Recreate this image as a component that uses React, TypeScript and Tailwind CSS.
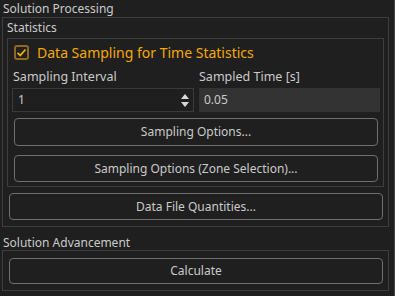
import { useState } from 'react';

const font = { fontFamily: '"Noto Sans", "Open Sans", sans-serif' };

function PanelButton({ label, className }: { label: string; className: string }) {
  return (
    <button
      className={`flex items-center justify-center rounded-[4px] border border-[#6e6e6e] bg-[#1f1f1f] text-[12px] text-[#cacaca] ${className}`}
    >
      {label}
    </button>
  );
}

export default function App() {
  const [sampling, setSampling] = useState(true);

  return (
    <div className="h-[296px] w-[395px] overflow-hidden bg-[#1f1f1f] text-[12px] leading-none text-[#cacaca]" style={font}>
      <div className="h-full w-[395px] border-r border-[#454545]">
        {/* Solution Processing */}
        <div className="flex h-[17px] items-center pl-[3px]">Solution Processing</div>
        <div className="ml-[2px] h-[210px] w-[387px] border border-[#3e3e3e]">
          <div className="flex h-[20px] items-center pl-[4px]">Statistics</div>

          {/* Statistics group */}
          <div className="ml-[4px] h-[149px] w-[377px] border border-[#3e3e3e]">
            <label className="mt-[6px] ml-[6px] flex h-[15px] cursor-pointer items-center gap-[8px]">
              <span
                onClick={() => setSampling(!sampling)}
                className="flex h-[15px] w-[15px] items-center justify-center rounded-[3px] border-2 border-[#8c6a24] bg-[#1f1f1f]"
              >
                {sampling && (
                  <svg width="11" height="11" viewBox="0 0 11 11">
                    <path d="M1.5 5.8 L4.3 8.4 L9.5 2.5" fill="none" stroke="#f5a800" strokeWidth="1.8" />
                  </svg>
                )}
              </span>
              <span className="text-[14px] text-[#f5a800]">Data Sampling for Time Statistics</span>
            </label>

            <div className="mt-[9px] flex gap-[5px] pl-[4px]">
              <div className="flex w-[182px] flex-col">
                <div className="flex h-[16px] items-center pl-[1px] text-[12.5px]">Sampling Interval</div>
                <div className="mt-[3px] flex h-[24px] items-center justify-between border border-[#3a3a3a] pl-[5px] pr-[3px]">
                  <span>1</span>
                  <svg width="10" height="17" viewBox="0 0 10 17">
                    <path d="M1 7 L5 2 L9 7 Z" fill="#d8d8d8" />
                    <path d="M1 10 L5 15 L9 10 Z" fill="#d8d8d8" />
                  </svg>
                </div>
              </div>
              <div className="flex w-[181px] flex-col">
                <div className="flex h-[16px] items-center text-[12.5px]">Sampled Time [s]</div>
                <div className="mt-[3px] flex h-[24px] items-center bg-[#333333] pl-[5px]">0.05</div>
              </div>
            </div>

            <PanelButton label="Sampling Options..." className="mt-[6px] ml-[6px] h-[28px] w-[364px]" />
            <PanelButton label="Sampling Options (Zone Selection)..." className="mt-[9px] ml-[6px] h-[27px] w-[364px]" />
          </div>

          <PanelButton label="Data File Quantities..." className="mt-[6px] ml-[6px] h-[27px] w-[374px]" />
        </div>

        {/* Solution Advancement */}
        <div className="flex h-[22px] items-center pl-[3px] pt-[10px]">Solution Advancement</div>
        <div className="mt-[1px] ml-[2px] h-[41px] w-[387px] border border-[#3e3e3e]">
          <PanelButton label="Calculate" className="mt-[7px] ml-[6px] h-[26px] w-[374px]" />
        </div>
      </div>
    </div>
  );
}
